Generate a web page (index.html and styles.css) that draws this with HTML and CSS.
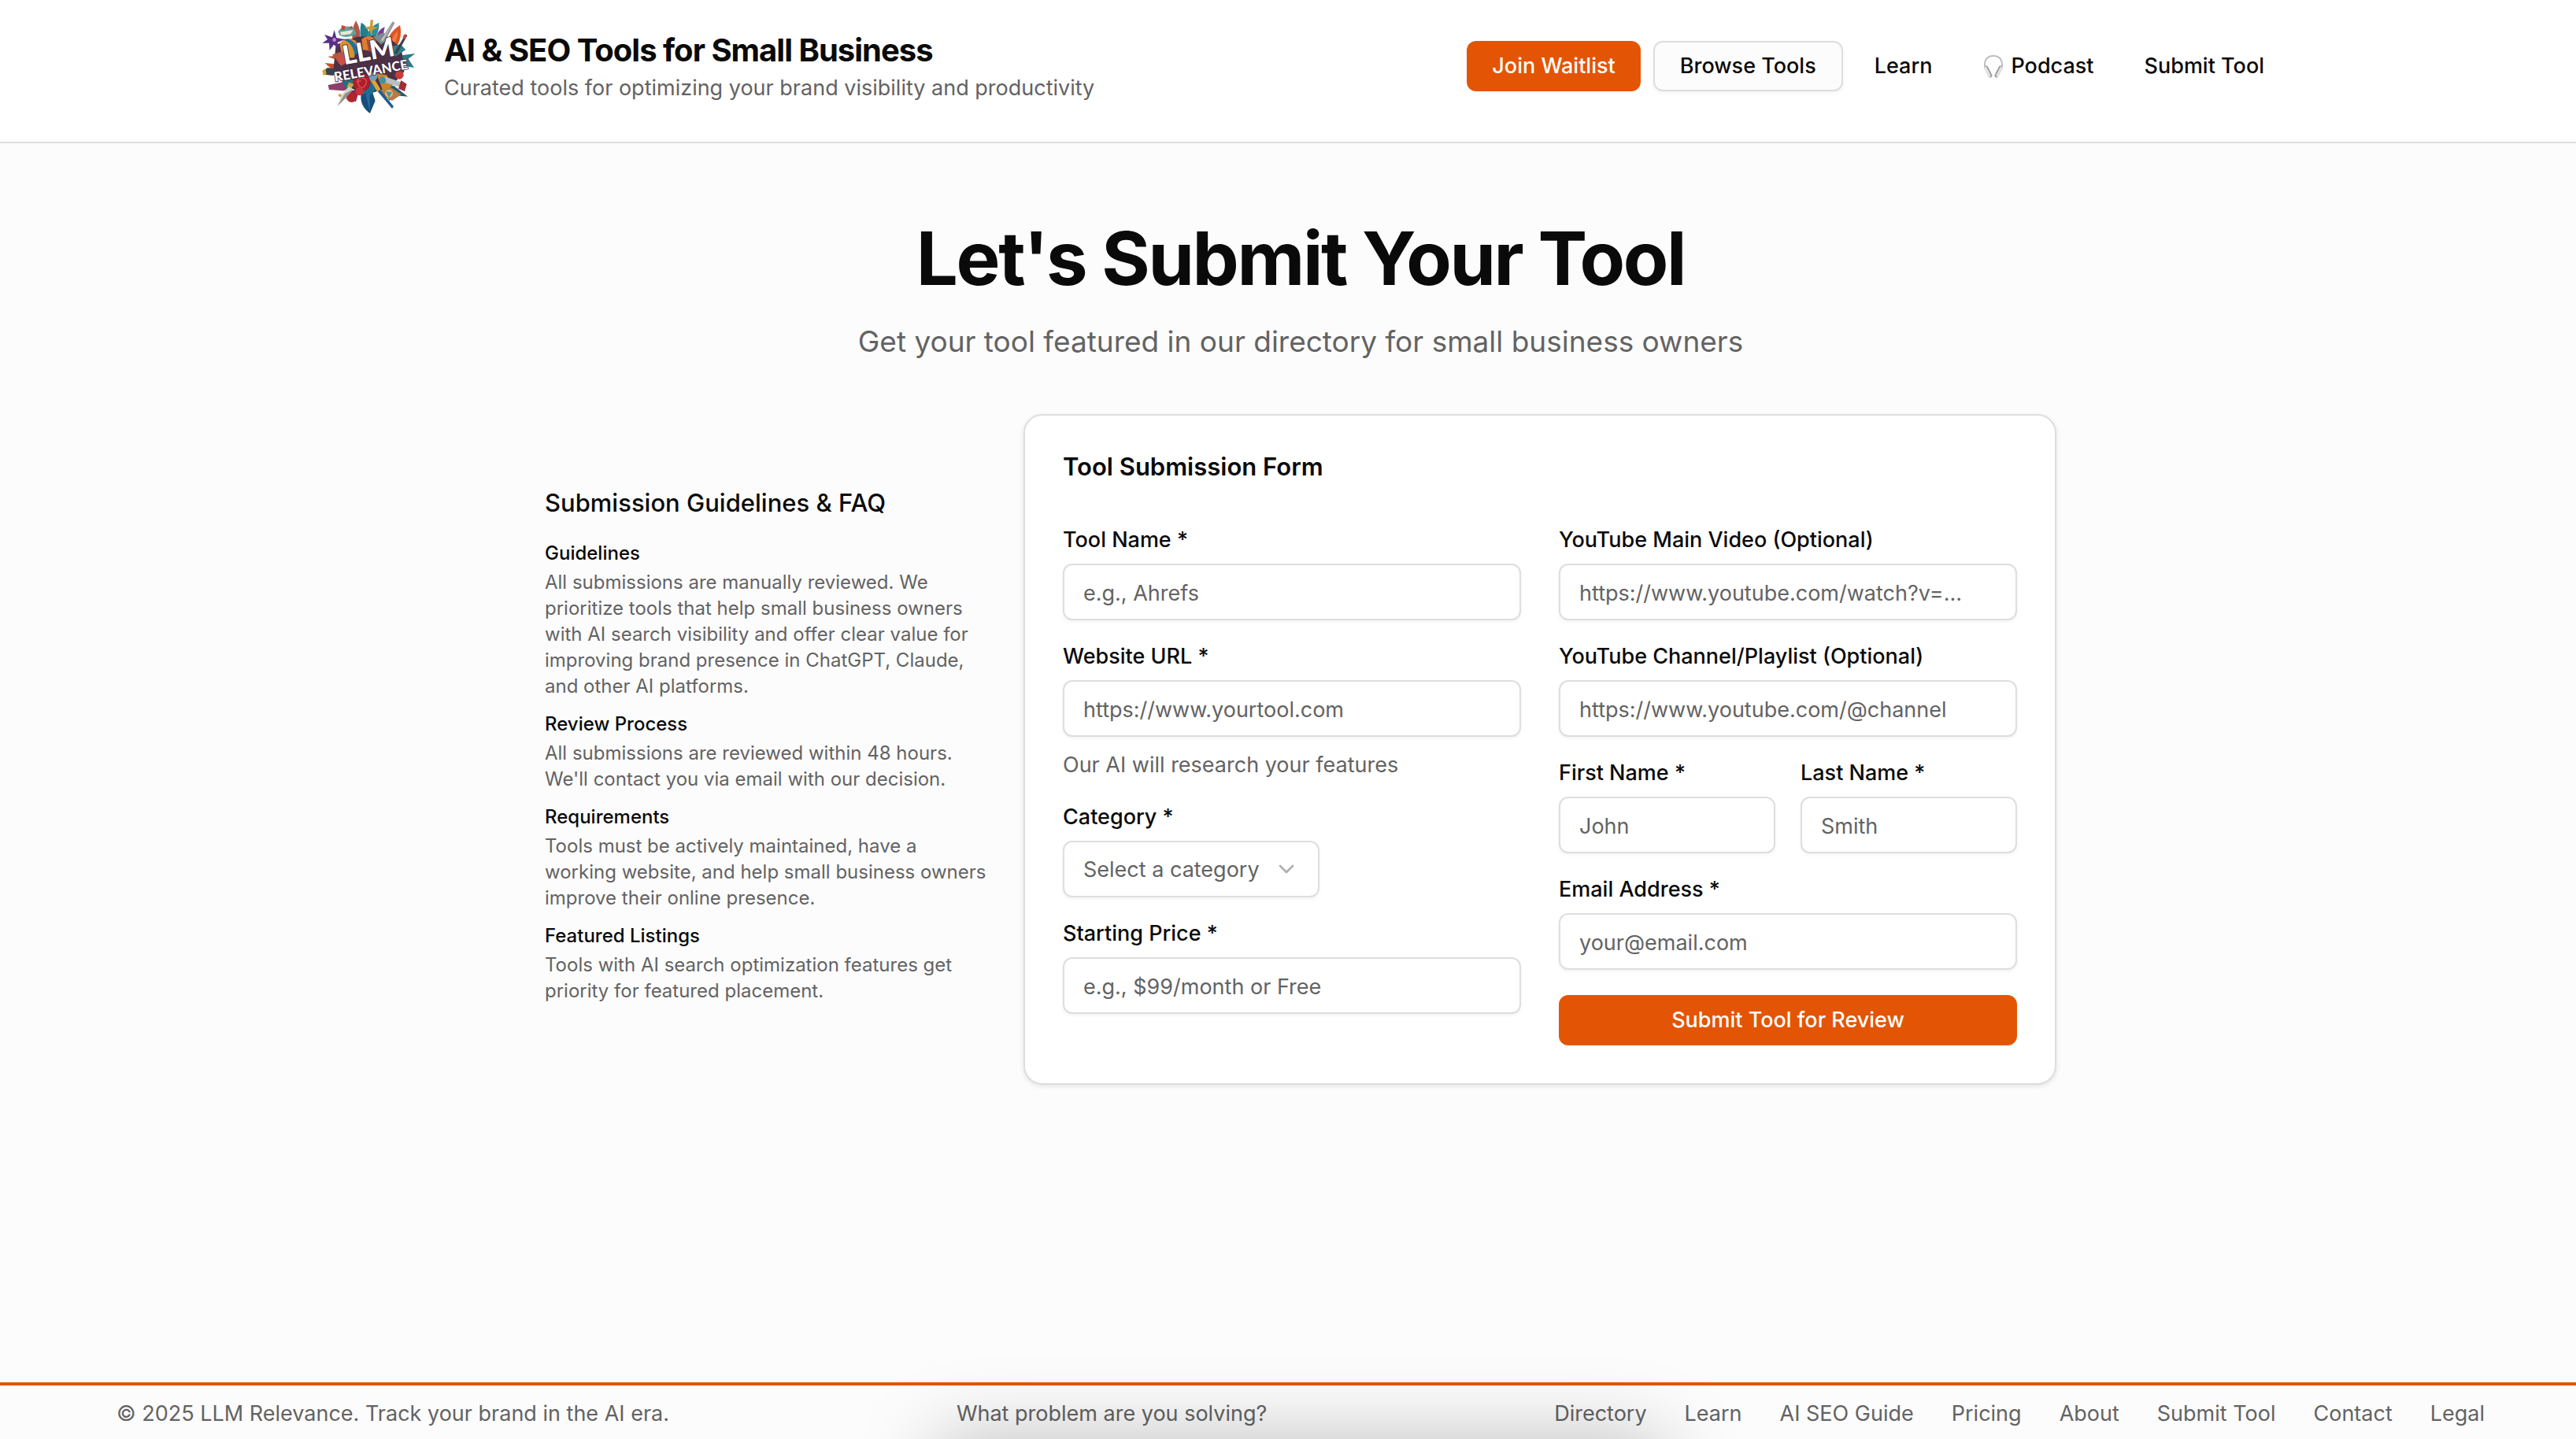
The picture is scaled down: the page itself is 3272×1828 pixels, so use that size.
FILE: index.html
```html
<!DOCTYPE html>
<html lang="en">
<head>
  <meta charset="UTF-8" />
  <meta name="viewport" content="width=device-width, initial-scale=1.0" />
  <title>Submit Your Tool - LLM Relevance</title>
  <link rel="stylesheet" href="styles.css">
</head>
<body>
  <header class="site-header">
    <div class="header-inner">
      <a class="brand" href="#home">
        <svg class="logo" viewBox="42 30 384 384" aria-hidden="true">
          <!-- outer leaves -->
          <path fill="#b0584a" d="M186 48q24 40 14 84h-26q-8-48 12-84z"/>
          <path fill="#1d7f92" d="M206 56q36 20 34 76l-30 8q-12-44-4-84z"/>
          <path fill="#2a8f9c" d="M274 56q4 40-26 72l-22-18q10-38 48-54z"/>
          <path fill="#7a3d8c" d="M296 72l-8 44-26 4q4-34 34-48z"/>
          <path fill="#dd5526" d="M354 66q12 48-18 88l-30 20q-16-66 48-108z"/>
          <path fill="#f07a3c" d="M346 86q2 36-30 72 2-44 30-72z"/>
          <path fill="#2a7b86" d="M350 182l62-8-26 20 22 34-64-12z"/>
          <path fill="#c94f2c" d="M68 210l60 6 10 26-40-4zM78 186l50-6 4 24z"/>
          <path fill="#8c3f6a" d="M80 294l60-12 30 20-30 14-56-4z"/>
          <path fill="#174f7a" d="M206 330l40-20 14 44-20 48q-40-28-34-72z"/>
          <path fill="#2a6ea0" d="M224 330l16 66-2-70z"/>
          <path fill="#6b2f5c" d="M160 318l40-10-14 50q-26-10-26-40z"/>
          <path fill="#1a5c6d" d="M330 296l54 42-50-4-20 20-24-50z"/>
          <path fill="#b87a4a" d="M300 290l60 40-36 24-50-30z"/>
          <!-- core -->
          <path fill="#4c3145" d="M110 140l80-30 110-6 60 50 10 90-50 56-90 30-80-30-50-60z"/>
          <path fill="#d9922e" d="M124 136q30-34 66-6l-10 60-44 2z"/>
          <path fill="#1f6f9c" d="M134 120q50-10 60 50l-12 10q-8-50-48-60z"/>
          <path fill="#dd7c35" d="M208 120q30-26 56 6l-8 40-44-6z"/>
          <path fill="#a94b28" d="M226 116q24 10 22 52l-14-4z"/>
          <path fill="#7d8a8f" d="M252 110l40-16 20 20-30 26z"/>
          <path fill="#2c7f8d" d="M310 150l46-12 20 22-40 26z"/>
          <path fill="#b9563f" d="M96 178l40-12 24 30-30 26z"/>
          <path fill="#286f80" d="M130 270l50-12 14 34-44 22z"/>
          <path fill="#c8862c" d="M264 250l40 6 20 40-34 22z"/>
          <path fill="#1c6f93" d="M204 290l44-14 18 30-24 26-36-8z"/>
          <!-- snake and flower -->
          <path fill="#5ea39c" d="M118 90q20-30 60-14l10 24q-40 20-64 4z"/>
          <path fill="#ece4d6" d="M126 92l50-8-10 16-36 4z"/>
          <path fill="#c9463a" d="M132 66l14 4-4 16-12-4zM156 76l16-8 2 12z"/>
          <path fill="#5b2f86" d="M66 102l30 10 8-28 8 30 32 6-28 12 8 26-22-18-16 22-2-28-26 0 20-14z"/>
          <circle cx="104" cy="122" r="7" fill="#b88ad0"/>
          <!-- sword hilt and pens -->
          <path fill="#c99a35" d="M242 46l10 0-2 26 22 2-22 10-4 24-8-24-20-8 22-6z"/>
          <path fill="#8f9599" d="M326 52l8 6-40 74-16-6z"/>
          <path fill="#ccd0d2" d="M328 56l-40 70-6-2z"/>
          <path fill="#37424c" d="M376 100l6 6-40 70-10-4z"/>
          <path fill="#d0453a" d="M370 100l10 8-6 12-10-6z"/>
          <!-- roses -->
          <circle cx="208" cy="284" r="34" fill="#a81f2d"/>
          <path fill="none" stroke="#e0474c" stroke-width="5" d="M190 284q4-22 24-16t8 26-24 2 8-18"/>
          <circle cx="170" cy="340" r="20" fill="#b02530"/>
          <circle cx="200" cy="318" r="16" fill="#c9303a"/>
          <circle cx="134" cy="200" r="17" fill="#cf4d47"/>
          <circle cx="352" cy="256" r="16" fill="#c83b3b"/>
          <!-- gear, knife and brushes -->
          <path fill="#3d4148" d="M64 240l14-12 30 4 8 16-18 10-30-4z"/>
          <path fill="#cfa63c" d="M58 240l12-10 4 22-12 6zM160 284l18 6-10 18-16-8zM122 326l30 14-4 8-30-12z"/>
          <path fill="#d8d3c6" d="M158 300l18 10-36 40-24 24 16-42z"/>
          <path fill="#8a8f92" d="M174 310l-34 40-24 24 28-46z"/>
          <path fill="#1d5f8d" d="M244 288l14-4 72 92-6 8z"/>
          <path fill="#d9a63b" d="M238 270l18 0 24 40-12 10z"/>
          <path fill="#b9bec2" d="M296 262l66 22-4 20-68-22z"/>
          <path fill="#9c2f38" d="M358 276l22 14-8 28-24-10z"/>
          <circle cx="252" cy="262" r="16" fill="#6f9fbf"/>
          <circle cx="288" cy="276" r="13" fill="#3c93a6"/>
          <circle cx="312" cy="326" r="15" fill="#e2b565"/>
          <path fill="#4b90a8" d="M300 318l24 4-12 20z"/>
          <g class="logo-text" transform="rotate(-10 236 210)">
            <text x="242" y="200" text-anchor="middle" font-size="100">LLM</text>
            <text x="238" y="258" text-anchor="middle" font-size="50">RELEVANCE</text>
          </g>
        </svg>
        <div>
          <div class="brand-name">AI &amp; SEO Tools for Small Business</div>
          <div class="brand-tagline">Curated tools for optimizing your brand visibility and productivity</div>
        </div>
      </a>
      <nav class="main-nav">
        <a class="btn btn-primary" href="#waitlist">Join Waitlist</a>
        <a class="btn btn-outline" href="#tools">Browse Tools</a>
        <a class="btn btn-ghost" href="#learn">Learn</a>
        <a class="btn btn-ghost" href="#podcast">
          <svg class="headphones" viewBox="0 0 28 32" fill="none" aria-hidden="true">
            <path d="M4 20C1 10 5 3 14 3s13 7 10 17" stroke="#bdbdbd" stroke-width="2"/>
            <path d="M5 18l5 10M23 18l-5 10" stroke="#9b9b9b" stroke-width="5" stroke-linecap="round"/>
            <path d="M4 18l5 10M24 18l-5 10" stroke="#e4e4e4" stroke-width="3" stroke-linecap="round"/>
          </svg>
          Podcast
        </a>
        <a class="btn btn-ghost" href="#submit">Submit Tool</a>
      </nav>
    </div>
  </header>

  <main class="page">
    <h1>Let's Submit Your Tool</h1>
    <p class="lead">Get your tool featured in our directory for small business owners</p>

    <div class="columns">
      <aside class="guidelines">
        <h2>Submission Guidelines &amp; FAQ</h2>
        <h3>Guidelines</h3>
        <p>All submissions are manually reviewed. We prioritize tools that help small business owners with AI search visibility and offer clear value for improving brand presence in ChatGPT, Claude, and other AI platforms.</p>
        <h3>Review Process</h3>
        <p>All submissions are reviewed within 48 hours. We'll contact you via email with our decision.</p>
        <h3>Requirements</h3>
        <p>Tools must be actively maintained, have a working website, and help small business owners improve their online presence.</p>
        <h3>Featured Listings</h3>
        <p>Tools with AI search optimization features get priority for featured placement.</p>
      </aside>

      <section class="card">
        <h2>Tool Submission Form</h2>
        <form class="form-grid">
          <div class="form-col">
            <div class="field">
              <label for="toolName">Tool Name *</label>
              <input type="text" id="toolName" placeholder="e.g., Ahrefs" />
            </div>
            <div class="field">
              <label for="website">Website URL *</label>
              <input type="url" id="website" placeholder="https://www.yourtool.com" />
              <p class="hint">Our AI will research your features</p>
            </div>
            <div class="field">
              <label for="category">Category *</label>
              <div class="select-wrap">
                <select id="category">
                  <option>Select a category</option>
                </select>
                <svg class="chevron" viewBox="0 0 24 24" fill="none" stroke="currentColor" stroke-width="2" stroke-linecap="round" stroke-linejoin="round" aria-hidden="true">
                  <path d="m6 9 6 6 6-6"/>
                </svg>
              </div>
            </div>
            <div class="field">
              <label for="price">Starting Price *</label>
              <input type="text" id="price" placeholder="e.g., $99/month or Free" />
            </div>
          </div>
          <div class="form-col">
            <div class="field">
              <label for="video">YouTube Main Video (Optional)</label>
              <input type="url" id="video" placeholder="https://www.youtube.com/watch?v=..." />
            </div>
            <div class="field">
              <label for="channel">YouTube Channel/Playlist (Optional)</label>
              <input type="url" id="channel" placeholder="https://www.youtube.com/@channel" />
            </div>
            <div class="name-row">
              <div class="field">
                <label for="firstName">First Name *</label>
                <input type="text" id="firstName" placeholder="John" />
              </div>
              <div class="field">
                <label for="lastName">Last Name *</label>
                <input type="text" id="lastName" placeholder="Smith" />
              </div>
            </div>
            <div class="field">
              <label for="email">Email Address *</label>
              <input type="email" id="email" placeholder="your@email.com" />
            </div>
            <button type="submit" class="btn btn-primary">Submit Tool for Review</button>
          </div>
        </form>
      </section>
    </div>
  </main>

  <footer class="site-footer">
    <span>© 2025 LLM Relevance. Track your brand in the AI era.</span>
    <a href="#problem">What problem are you solving?</a>
    <nav class="footer-nav">
      <a href="#directory">Directory</a>
      <a href="#learn">Learn</a>
      <a href="#guide">AI SEO Guide</a>
      <a href="#pricing">Pricing</a>
      <a href="#about">About</a>
      <a href="#submit">Submit Tool</a>
      <a href="#contact">Contact</a>
      <a href="#legal">Legal</a>
    </nav>
  </footer>
  <div class="drawer-shadow"></div>
</body>
</html>
```
FILE: styles.css
```css
* {
  box-sizing: border-box;
}
body {
  margin: 0;
  min-height: 100vh;
  display: flex;
  flex-direction: column;
  font-family: Inter, 'Liberation Sans', sans-serif;
  font-size: 27px;
  line-height: 40px;
  background: #fcfcfc;
  color: #0a0a0a;
}
a {
  color: inherit;
  text-decoration: none;
}
h1, h2, h3, p {
  margin: 0;
}

/* header */
.site-header {
  background: white;
  border-bottom: 2px solid #dedede;
  padding: 20px 0 32px 32px;
}
.header-inner {
  max-width: 2496px;
  margin: 0 auto;
  display: flex;
  justify-content: space-between;
  align-items: center;
}
.brand {
  display: flex;
  align-items: center;
  gap: 32px;
}
.logo {
  width: 128px;
  height: 128px;
}
.logo-text {
  font-family: Lato, sans-serif;
  font-weight: 900;
  fill: white;
  stroke: #3a2340;
  stroke-width: 5px;
  paint-order: stroke;
}
.brand-name {
  font-size: 40px;
  font-weight: 700;
  line-height: 56px;
  letter-spacing: -0.025em;
}
.brand-tagline {
  color: #636363;
}
.main-nav {
  display: flex;
  gap: 16px;
}
.btn {
  display: flex;
  align-items: center;
  justify-content: center;
  gap: 8px;
  height: 64px;
  padding: 0 32px;
  border: 0;
  border-radius: 12px;
  font: inherit;
  font-weight: 500;
}
.btn-primary {
  background: #e35505;
  color: white;
}
.btn-outline {
  background: #fcfcfc;
  border: 2px solid #dedede;
  box-shadow: 0 2px 4px rgba(0,0,0,0.05);
}
.btn-ghost {
  padding: 0 24px;
}
.headphones {
  width: 28px;
  height: 32px;
}

/* page */
.page {
  flex: 1;
  padding: 86px 0 0 32px;
}
h1 {
  font-size: 94px;
  font-weight: 700;
  line-height: 120px;
  letter-spacing: -0.025em;
  text-align: center;
}
.lead {
  margin-top: 18px;
  font-size: 37px;
  line-height: 56px;
  color: #636363;
  text-align: center;
}
.columns {
  max-width: 1920px;
  margin: 64px auto 0;
  display: grid;
  grid-template-columns: 568px 1fr;
  gap: 40px;
  align-items: center;
}

/* guidelines */
.guidelines {
  padding-top: 6px;
  font-size: 24px;
  line-height: 33px;
}
.guidelines h2 {
  font-size: 31px;
  font-weight: 500;
  line-height: 40px;
  margin-bottom: 28px;
}
.guidelines h3 {
  font-size: 24px;
  font-weight: 500;
  line-height: 32px;
  margin-bottom: 4px;
}
.guidelines p {
  color: #636363;
  margin-bottom: 16px;
}

/* form */
.card {
  background: white;
  border: 2px solid #dedede;
  border-radius: 24px;
  padding: 48px;
  box-shadow: 0 2px 6px rgba(0,0,0,0.1);
}
.card h2 {
  font-size: 31px;
  font-weight: 600;
  line-height: 34px;
  margin-bottom: 62px;
}
.form-grid {
  display: grid;
  grid-template-columns: 1fr 1fr;
  gap: 48px;
}
.form-col {
  display: flex;
  flex-direction: column;
  gap: 32px;
}
.field {
  display: flex;
  flex-direction: column;
  gap: 16px;
  min-width: 0;
}
.field label {
  font-weight: 500;
  line-height: 28px;
}
.field input, .field select {
  width: 100%;
  height: 72px;
  padding: 2px 24px 0;
  border: 2px solid #dedede;
  border-radius: 12px;
  background: white;
  color: #636363;
  font: inherit;
  box-shadow: 0 2px 4px rgba(0,0,0,0.05);
}
.field input::placeholder {
  color: #636363;
  opacity: 1;
}
.select-wrap {
  position: relative;
  width: 326px;
}
.field select {
  appearance: none;
}
.chevron {
  position: absolute;
  right: 26px;
  top: 20px;
  width: 32px;
  height: 32px;
  color: #b0b0b0;
  pointer-events: none;
}
.hint {
  color: #636363;
}
.name-row {
  display: grid;
  grid-template-columns: 1fr 1fr;
  gap: 32px;
}

/* footer */
.site-footer {
  display: flex;
  justify-content: space-between;
  align-items: center;
  height: 72px;
  padding: 4px 116px 0 148px;
  border-top: 4px solid #e35505;
  color: #636363;
}
.footer-nav {
  display: flex;
  gap: 48px;
}

/* soft shadow of the drawer parked below the window */
.drawer-shadow {
  position: fixed;
  left: 50%;
  top: 100%;
  width: 920px;
  height: 200px;
  margin-left: -444px;
  box-shadow: 0 0 100px rgba(0,0,0,0.25);
}
```
